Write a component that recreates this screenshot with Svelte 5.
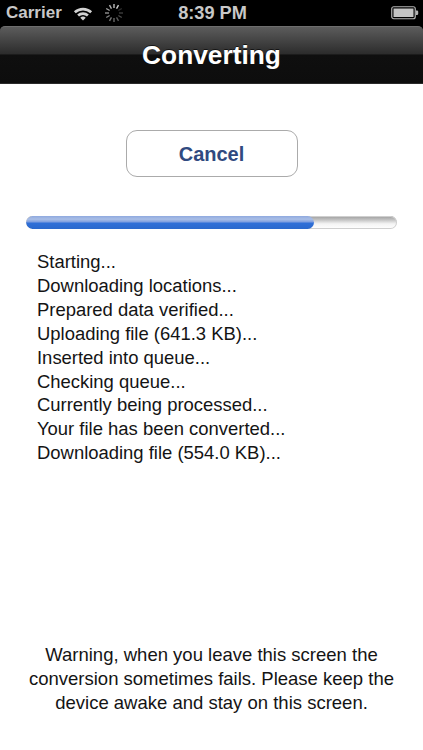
<script>
	let log = [
		'Starting...',
		'Downloading locations...',
		'Prepared data verified...',
		'Uploading file (641.3 KB)...',
		'Inserted into queue...',
		'Checking queue...',
		'Currently being processed...',
		'Your file has been converted...',
		'Downloading file (554.0 KB)...'
	];

	let percent = 77.5;

	// spinner spokes, brightest at the top right
	let spokes = Array.from({ length: 12 }, (_, i) => i * 30);
</script>

<div class="screen">
	<div class="status">
		<div class="status-left">
			<span class="carrier">Carrier</span>
			<svg class="wifi" width="20" height="15" viewBox="0 0 22 16">
				<path d="M1 5.6 A14.5 14.5 0 0 1 21 5.6 L19 7.8 A11.6 11.6 0 0 0 3 7.8 Z" fill="#d2d2d2" />
				<path d="M4.6 9.2 A9.4 9.4 0 0 1 17.4 9.2 L15.4 11.3 A6.6 6.6 0 0 0 6.6 11.3 Z" fill="#d2d2d2" />
				<path d="M8 12.7 A4.4 4.4 0 0 1 14 12.7 L11 15.8 Z" fill="#d2d2d2" />
			</svg>
			<svg class="spinner" width="20" height="20" viewBox="-10 -10 20 20">
				{#each spokes as angle, i}
					<line
						x1="0"
						y1="-5"
						x2="0"
						y2="-9"
						stroke="#e0e0e0"
						stroke-width="1.4"
						opacity={0.2 + ((i + 10) % 12) * 0.065}
						transform="rotate({angle})"
					/>
				{/each}
			</svg>
		</div>
		<span class="clock">8:39 PM</span>
		<div class="status-right">
			<svg width="28" height="14" viewBox="0 0 28 14">
				<rect x="0.75" y="0.75" width="23.5" height="12" rx="2" fill="none" stroke="#b4b4b4" stroke-width="1.2" />
				<rect x="2.5" y="2.5" width="20" height="8.5" fill="#c4c4c4" />
				<path d="M25 4.5 h1 a1.2 1.2 0 0 1 1.2 1.2 v2 a1.2 1.2 0 0 1 -1.2 1.2 h-1 Z" fill="#b4b4b4" />
			</svg>
		</div>
	</div>

	<header class="navbar">
		<h1>Converting</h1>
	</header>

	<main class="content">
		<button class="cancel">Cancel</button>

		<div class="track">
			<div class="fill" style="width: {percent}%"></div>
		</div>

		<div class="log">
			{#each log as line}
				<p>{line}</p>
			{/each}
		</div>

		<p class="warning">
			Warning, when you leave this screen the conversion sometimes fails. Please keep the device awake and stay on this screen.
		</p>
	</main>
</div>

<style>
	:global(body) {
		margin: 0;
		background: #fff;
	}

	.screen {
		width: 423px;
		height: 750px;
		display: flex;
		flex-direction: column;
		overflow: hidden;
		font-family: 'Liberation Sans', Arial, sans-serif;
		background: #000;
	}

	.status {
		height: 26px;
		flex-shrink: 0;
		display: grid;
		grid-template-columns: 1fr auto 1fr;
		align-items: center;
		padding: 0 4px 0 6px;
		color: #c8c8c8;
		font-size: 17px;
		font-weight: 700;
	}

	.status-left {
		display: flex;
		align-items: center;
		gap: 11px;
	}

	.clock {
		font-size: 18.2px;
	}

	.status-right {
		display: flex;
		justify-content: flex-end;
	}

	.navbar {
		height: 58px;
		flex-shrink: 0;
		box-sizing: border-box;
		display: flex;
		align-items: center;
		justify-content: center;
		border-radius: 5px 5px 0 0;
		border-top: 1px solid #6e6e6e;
		border-bottom: 1px solid #2a2a2a;
		background: linear-gradient(to bottom, #5c5c5c 0%, #2c2c2c 48%, #0f0f0f 50%, #0d0d0d 100%);
		box-shadow: 0 1px 1px #c4c4c4;
	}

	h1 {
		margin: 0;
		color: #fff;
		font-size: 26.3px;
		font-weight: 700;
		text-shadow: 0 -1px 0 rgba(0, 0, 0, 0.6);
	}

	.content {
		flex: 1;
		background: #fff;
		display: flex;
		flex-direction: column;
		padding: 46px 26px 35px;
		min-height: 0;
	}

	.cancel {
		align-self: center;
		width: 172px;
		height: 47px;
		border: 1.5px solid #ababab;
		border-radius: 11px;
		background: #fff;
		color: #304a80;
		font-family: inherit;
		font-size: 20px;
		font-weight: 700;
		padding: 2px 0 0;
	}

	.track {
		margin-top: 39px;
		height: 13px;
		border-radius: 7px;
		overflow: hidden;
		box-shadow: inset 0 0 0 1px #cfcfcf;
		background: linear-gradient(to bottom, #9c9c9c 0%, #c4c4c4 30%, #f4f4f4 60%, #ffffff 100%);
	}

	.fill {
		height: 100%;
		border-radius: 7px;
		background: linear-gradient(to bottom, #8fa9df 0%, #a9bee6 25%, #7f9fe0 45%, #2f6fd8 55%, #2a68cc 100%);
	}

	.log {
		margin-top: 21px;
		padding-left: 11px;
		color: #141414;
		font-size: 18.45px;
		line-height: 23.9px;
	}

	.log p {
		margin: 0;
	}

	.warning {
		margin: auto 0 0;
		text-align: center;
		color: #141414;
		font-size: 18.5px;
		line-height: 24px;
	}
</style>
